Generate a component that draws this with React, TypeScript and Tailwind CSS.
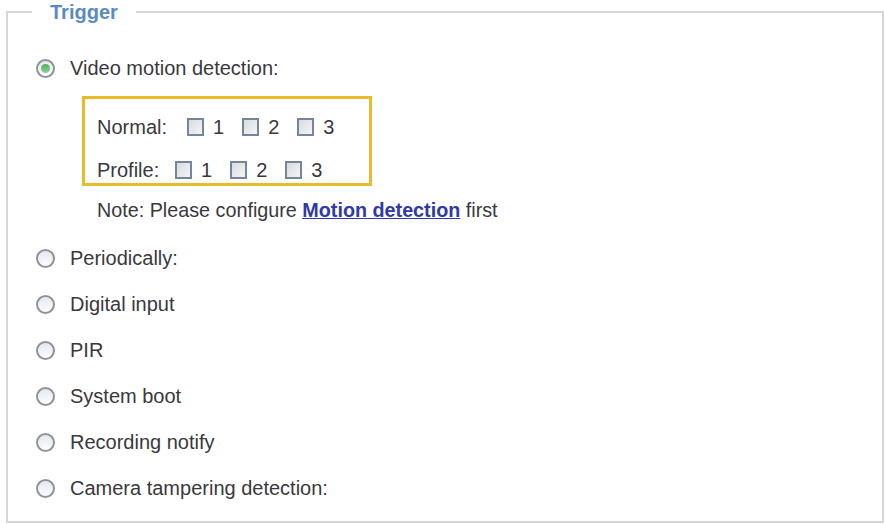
import React from "react";

const font = { fontFamily: '"Liberation Sans", Arial, sans-serif' };

function Radio({ checked = false }: { checked?: boolean }) {
  return (
    <span className="relative inline-flex w-[19px] h-[19px] shrink-0 rounded-full border-[2px] border-[#8f9399] bg-gradient-to-b from-[#e4e9f0] to-[#fbfcfd] items-center justify-center">
      {checked && (
        <span className="w-[9px] h-[9px] rounded-full bg-gradient-to-b from-[#4caf5a] to-[#8fd19a]" />
      )}
    </span>
  );
}

function Check() {
  return (
    <span className="inline-block w-[17px] h-[18px] shrink-0 border-[2px] border-[#76869a] bg-gradient-to-br from-[#d9dce0] to-[#f3f4f6]" />
  );
}

function RadioRow({ label, checked = false, h = "h-[46px]" }: { label: string; checked?: boolean; h?: string }) {
  return (
    <div className={`flex items-center ${h}`}>
      <Radio checked={checked} />
      <span className="ml-[15px] text-[20px] text-[#3a383d]">{label}</span>
    </div>
  );
}

function CbGroup() {
  return (
    <>
      {["1", "2", "3"].map((n) => (
        <span key={n} className="flex items-center">
          <Check />
          <span className="ml-[9px] mr-[18px] text-[20px] text-[#3a383d]">{n}</span>
        </span>
      ))}
    </>
  );
}

export default function App() {
  return (
    <div className="w-[885px] h-[524px] bg-white pt-[2px] pl-[6px] pr-[1px]" style={font}>
      <fieldset className="border-[2px] border-[#d6d6d6] h-[521px]">
        <legend className="ml-[24px] px-[18px] text-[20px] leading-[20px] font-bold text-[#5a8cc0]">Trigger</legend>
        <div className="pt-[31px] pl-[28px]">
          <RadioRow label="Video motion detection:" checked h="h-[30px]" />
          <div className="ml-[46px] mt-[13px] w-[290px] h-[90px] border-[3px] border-[#e9bb2a] pl-[12px] pt-[14px]">
            <div className="flex items-center h-[28px]">
              <span className="w-[90px] text-[20px] text-[#3a383d]">Normal:</span>
              <CbGroup />
            </div>
            <div className="flex items-center h-[28px] mt-[15px]">
              <span className="w-[78px] text-[20px] text-[#3a383d]">Profile:</span>
              <CbGroup />
            </div>
          </div>
          <div className="ml-[61px] mt-[13px] h-[24px] flex items-center text-[19.75px] text-[#3a383d] whitespace-nowrap">
            <span>Note: Please configure&nbsp;</span>
            <a className="font-bold text-[#2f3aa8] underline">Motion detection</a>
            <span>&nbsp;first</span>
          </div>
          <div className="mt-[12px]">
            <RadioRow label="Periodically:" />
            <RadioRow label="Digital input" />
            <RadioRow label="PIR" />
            <RadioRow label="System boot" />
            <RadioRow label="Recording notify" />
            <RadioRow label="Camera tampering detection:" />
          </div>
        </div>
      </fieldset>
    </div>
  );
}
